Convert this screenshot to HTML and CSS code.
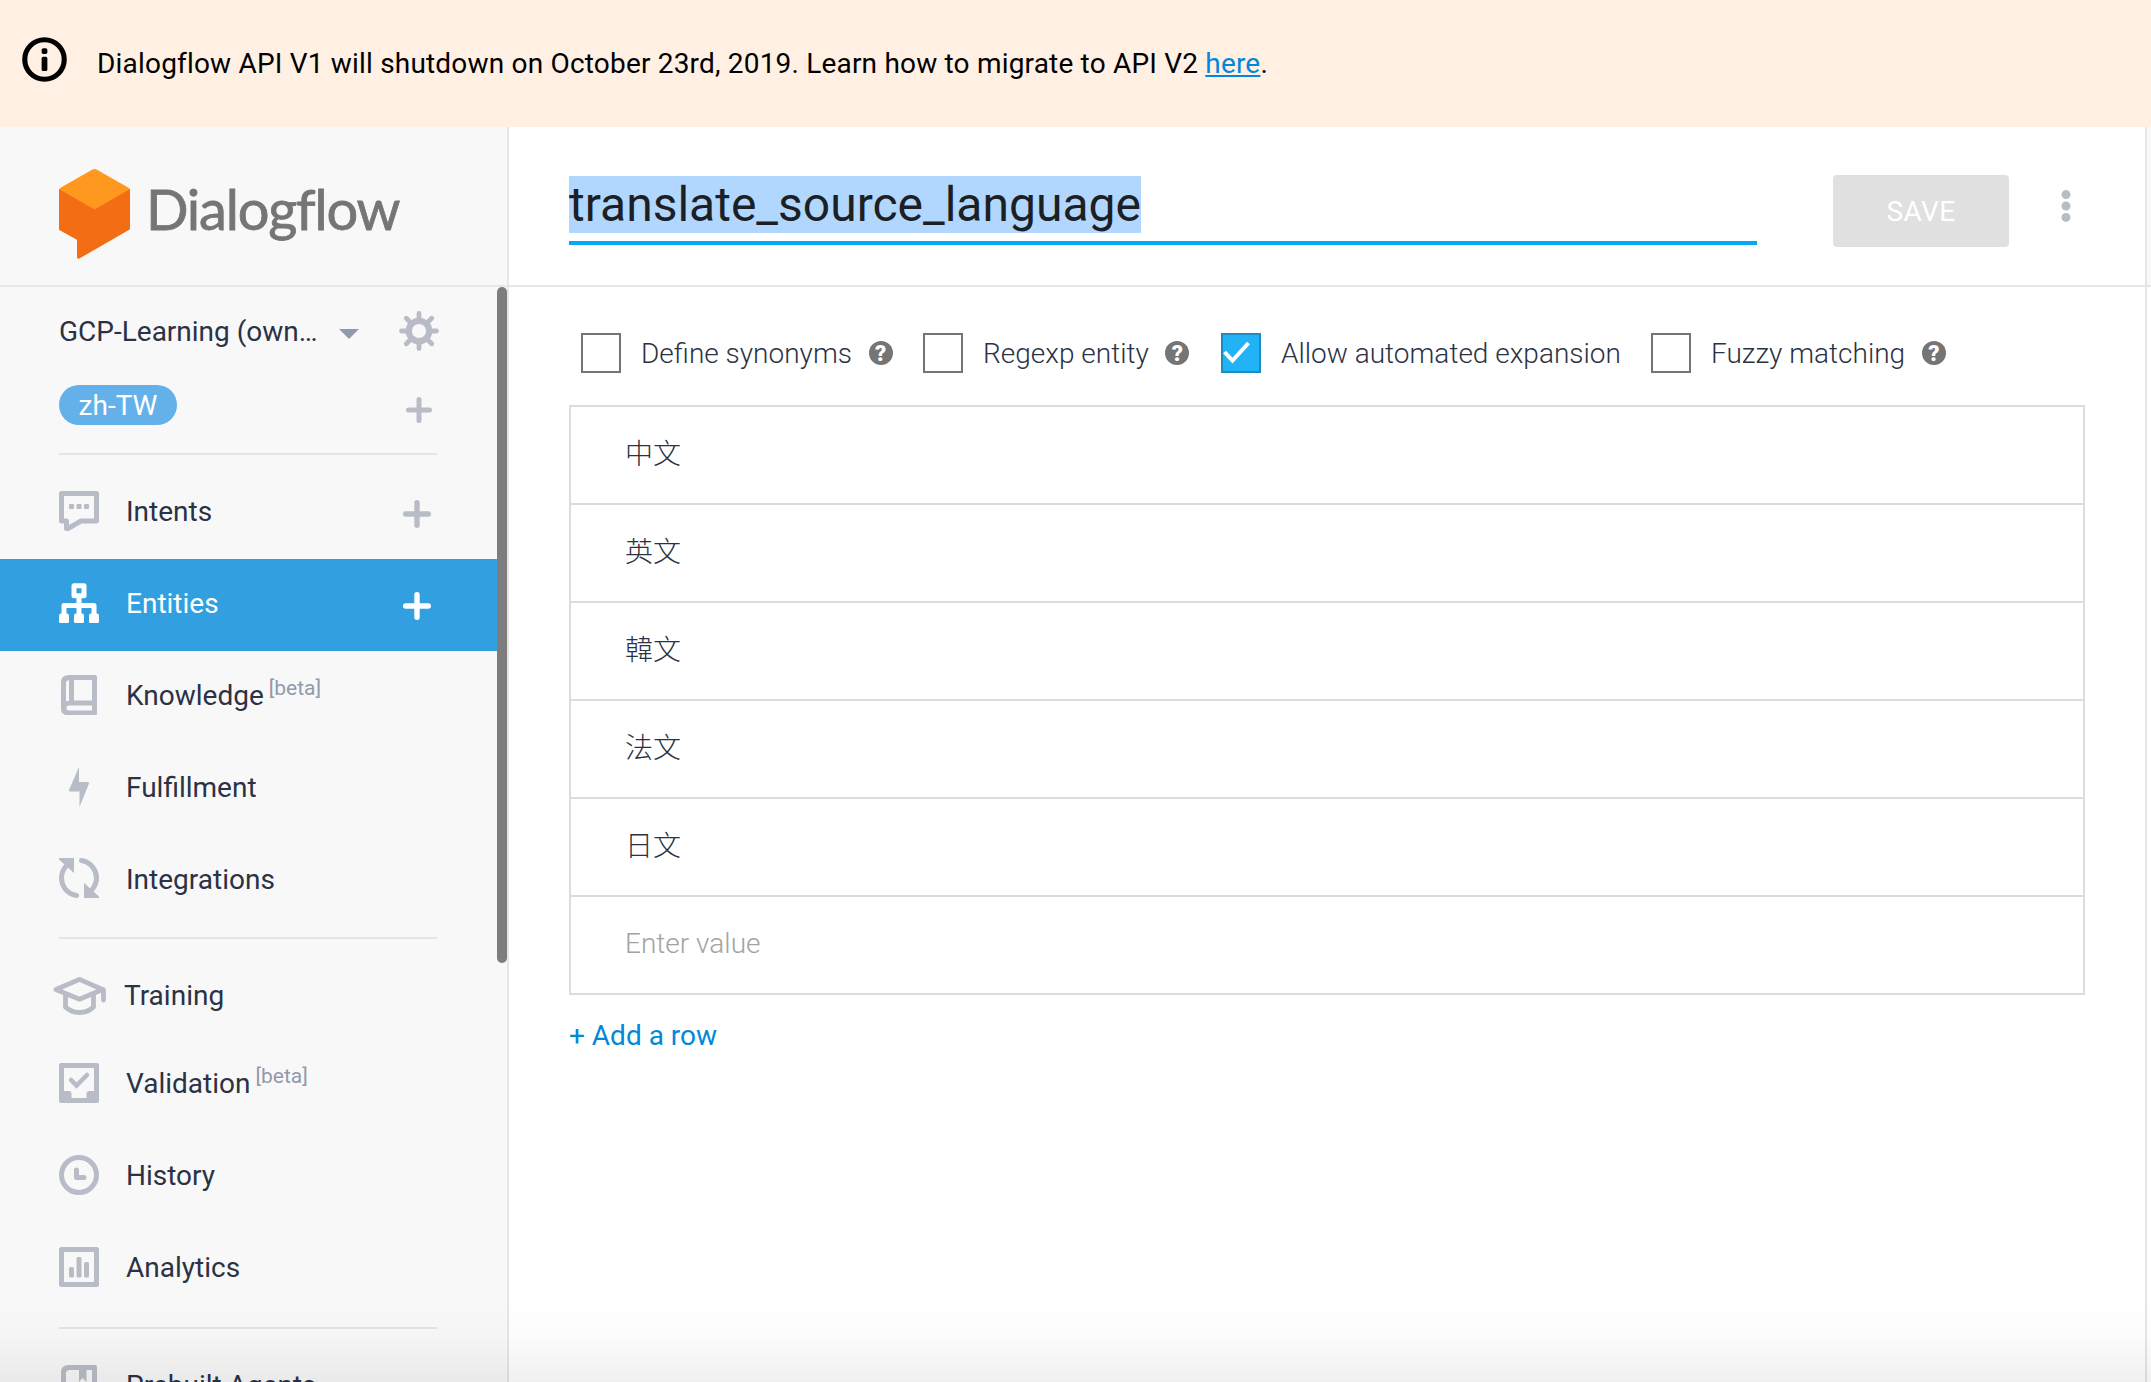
FILE: index.html
```html
<!DOCTYPE html>
<html lang="en">
<head>
<meta charset="utf-8">
<title>Dialogflow</title>
<link rel="stylesheet" href="styles.css">
</head>
<body>
<div class="banner">
  <svg class="banner-icon" viewBox="0 0 44 44"><circle cx="22" cy="22" r="19.3" fill="none" stroke="#000" stroke-width="5"/><rect x="19.2" y="11" width="5.6" height="5.6" rx="1.6"/><rect x="19.2" y="19.3" width="5.6" height="14" rx="1.6"/></svg>
  <p class="banner-text">Dialogflow API V1 will shutdown on October 23rd, 2019. Learn how to migrate to API V2 <a href="#">here</a>.</p>
</div>
<div class="app">
  <aside class="sidebar">
    <div class="brand">
      <svg class="brand-mark" viewBox="0 0 71 91"><path fill="#f26d13" stroke="#f26d13" stroke-width="3" stroke-linejoin="round" d="M1.500 22L35.500 38L69.500 22V60.500L19.500 89.300V71L1.500 61Z"/><path fill="#ff981e" d="M33 1.700Q35.500 .3 38 1.700L69.500 19.800Q71 21 69.500 22L35.500 41.500L1.500 22Q0 21 1.500 19.800Z"/></svg>
      <span class="brand-name">Dialogflow</span>
    </div>
    <div class="side-body">
      <nav class="menu">
        <div class="agent">
          <span class="agent-name">GCP-Learning (own…</span>
          <svg class="caret" viewBox="0 0 20 10"><path fill="#9299ad" d="M0 0H20L10 10Z"/></svg>
          <svg class="gear" viewBox="-20 -20 40 40"><g stroke="#b7bcc7" stroke-width="4.800" stroke-linecap="round"><path d="M0 -17.500V17.500M-17.500 0H17.500M-12.700 -12.700L12.700 12.700M12.700 -12.700L-12.700 12.700"/></g><circle r="10.200" fill="#f8f8f8" stroke="#b7bcc7" stroke-width="6.200"/></svg>
        </div>
        <div class="lang">
          <span class="pill">zh-TW</span>
          <svg class="plus-sm" viewBox="0 0 26 26"><path d="M13 2.500V23.500M2.500 13H23.500" stroke="#b7bcc7" stroke-width="5" stroke-linecap="round"/></svg>
        </div>
        <hr>
        <a class="item"><svg class="ico" viewBox="0 0 40 40"><path fill="none" stroke="#b7bcc7" stroke-width="5" stroke-linejoin="round" d="M2.500 2.500H37.500V30H22L9 37.500H7.500V30H2.500Z"/><path fill="#b7bcc7" d="M11 13h3a1 1 0 0 1 1 1v3a1 1 0 0 1-1 1h-3a1 1 0 0 1-1-1v-3a1 1 0 0 1 1-1zM18.500 13h3a1 1 0 0 1 1 1v3a1 1 0 0 1-1 1h-3a1 1 0 0 1-1-1v-3a1 1 0 0 1 1-1zM26 13h3a1 1 0 0 1 1 1v3a1 1 0 0 1-1 1h-3a1 1 0 0 1-1-1v-3a1 1 0 0 1 1-1z"/></svg><span>Intents</span><svg class="plus" viewBox="0 0 28 28"><path d="M14 2.700V25.300M2.700 14H25.300" stroke="#b7bcc7" stroke-width="5.400" stroke-linecap="round"/></svg></a>
        <a class="item active"><svg class="ico" viewBox="0 0 40 40"><g fill="#fff"><rect y="30.500" width="10" height="9.800" rx="2"/><rect x="15" y="30.500" width="10" height="9.800" rx="2"/><rect x="30" y="30.500" width="10" height="9.800" rx="2"/></g><g fill="none" stroke="#fff" stroke-width="5" stroke-linejoin="round"><rect x="15" y="2.700" width="10" height="10"/><path d="M20 13V32M5 32V22.500H35V32"/></g></svg><span>Entities</span><svg class="plus" viewBox="0 0 28 28"><path d="M14 2.700V25.300M2.700 14H25.300" stroke="#fff" stroke-width="5.400" stroke-linecap="round"/></svg></a>
        <a class="item"><svg class="ico" viewBox="0 0 40 40"><path fill="#b7bcc7" fill-rule="evenodd" d="M9 0H36Q38 0 38 2V38.500Q38 40.500 36 40.500H9Q2 40 2 33.500V7Q2 .5 9 0ZM10 5Q7 5.500 7 8.500V26H10ZM15 5V25.500H33V5ZM10 30.500Q7.500 30.500 7.500 33T10 35.500H33V30.500Z"/></svg><span>Knowledge</span><sup>[beta]</sup></a>
        <a class="item"><svg class="ico" viewBox="0 0 40 40"><path fill="#b7bcc7" d="M20 0V15H29Q30.500 15 30 16.500L20.500 40V24.500H11Q9.500 24.500 10 23Z"/></svg><span>Fulfillment</span></a>
        <a class="item"><svg class="ico sync" viewBox="0 0 40 40"><g fill="none" stroke="#b7bcc7" stroke-width="5" stroke-linecap="round"><path d="M22.500 2.500C33 4.500 37.500 13 37.500 20C37.500 26 35 30 31 34"/><path d="M17.500 37.500C7 35.500 2.500 27 2.500 20C2.500 14 5 10 9 6"/></g><path fill="#b7bcc7" d="M0 0H15V15L0 1.500ZM40 40H25V25L40 38.500Z"/></svg><span>Integrations</span></a>
        <hr class="second">
        <a class="item training"><svg class="cap" viewBox="0 0 53 38"><g fill="none" stroke="#b7bcc7" stroke-width="4.800" stroke-linejoin="round" stroke-linecap="round"><path d="M3 12.500L26.500 2.400L49.500 12.500L26.500 22.300Z"/><path d="M12.500 18V30Q18 35.500 26.500 35.500T40.500 30V18M50.500 13V23"/></g></svg><span>Training</span></a>
        <a class="item"><svg class="ico" viewBox="0 0 40 40"><path fill="#b7bcc7" fill-rule="evenodd" d="M2 0H38Q40 0 40 2V38Q40 40 38 40H2Q0 40 0 38V2Q0 0 2 0ZM5 5V28H10Q12.500 28 12.500 30.500V35H27.500V30.500Q27.500 28 30 28H35V5Z"/><path d="M12 17L17.500 22.500L28 12" fill="none" stroke="#b7bcc7" stroke-width="4.500" stroke-linecap="round"/></svg><span>Validation</span><sup>[beta]</sup></a>
        <a class="item"><svg class="ico" viewBox="0 0 40 40"><circle cx="20" cy="20" r="17.500" fill="none" stroke="#b7bcc7" stroke-width="5"/><path d="M17.500 15V22.500H25" fill="none" stroke="#b7bcc7" stroke-width="5" stroke-linecap="round" stroke-linejoin="round"/></svg><span>History</span></a>
        <a class="item"><svg class="ico" viewBox="0 0 40 40"><rect x="2.500" y="2.500" width="35" height="35" fill="none" stroke="#b7bcc7" stroke-width="5" stroke-linejoin="round"/><g fill="#b7bcc7"><rect x="10" y="20" width="5" height="10.500" rx="1.500"/><rect x="17.500" y="10" width="5" height="20.500" rx="1.500"/><rect x="25" y="15" width="5" height="15.500" rx="1.500"/></g></svg><span>Analytics</span></a>
        <hr class="third">
        <a class="item"><svg class="ico" viewBox="0 0 40 40"><path fill="#b7bcc7" fill-rule="evenodd" d="M9 0H36Q38 0 38 2V40H2V7Q2 .5 9 0ZM10 5Q7 5.500 7 8.500V26H33V5H27.500V17L23.500 13L20 17V5Z"/></svg><span>Prebuilt Agents</span></a>
      </nav>
      <div class="scroll-thumb"></div>
    </div>
  </aside>
  <main class="content">
    <header class="top">
      <div class="title"><span class="selected">translate_source_language</span></div>
      <button class="save">SAVE</button>
      <svg class="dots" viewBox="0 0 10 32"><g fill="#b7bcc7"><circle cx="5" cy="4.600" r="4.500"/><circle cx="5" cy="16" r="4.500"/><circle cx="5" cy="27.400" r="4.500"/></g></svg>
    </header>
    <div class="options">
      <div class="opt o1"><i class="box"></i><span>Define synonyms</span><b class="help">?</b></div>
      <div class="opt o2"><i class="box"></i><span>Regexp entity</span><b class="help">?</b></div>
      <div class="opt o3"><i class="box on"><svg viewBox="0 0 36 36"><path d="M1.500 17L9.500 25.500L25.500 8" fill="none" stroke="#fff" stroke-width="4"/></svg></i><span>Allow automated expansion</span></div>
      <div class="opt o4"><i class="box"></i><span>Fuzzy matching</span><b class="help">?</b></div>
    </div>
    <div class="table">
      <div class="row">中文</div>
      <div class="row">英文</div>
      <div class="row">韓文</div>
      <div class="row">法文</div>
      <div class="row">日文</div>
      <div class="row placeholder">Enter value</div>
    </div>
    <a class="add">+ Add a row</a>
  </main>
  <div class="edge"><div class="edge-top"></div></div>
</div>
<div class="fade"></div>
</body>
</html>
```

FILE: styles.css
```css
* { box-sizing: border-box; }
body { margin: 0; height: 1382px; overflow: hidden; display: flex; flex-direction: column; font-family: Roboto, "Noto Sans CJK TC", sans-serif; font-size: 28px; line-height: 32px; color: #2b3245; background: #fff; }
svg { display: block; flex: none; }
.banner { flex: none; height: 127px; background: #fff0e3; display: flex; align-items: flex-start; padding: 37px 0 0 22px; gap: 30px; color: #000; }
.banner-icon { width: 45px; height: 45px; }
.banner-text { margin: 11px 0 0; white-space: nowrap; letter-spacing: .188px; }
.banner-text a { color: #0288d8; text-decoration: underline; }
.app { flex: 1; min-height: 0; display: flex; }
.sidebar { width: 509px; flex: none; background: #f8f8f8; border-right: 2px solid #e6e6e6; display: flex; flex-direction: column; }
.brand { height: 160px; flex: none; border-bottom: 2px solid #e6e6e6; display: flex; align-items: flex-start; padding: 41px 0 0 59px; gap: 16px; }
.brand-mark { width: 71px; height: 91px; }
.brand-name { font-family: Lato, sans-serif; font-size: 56px; line-height: 68px; margin-top: 7px; letter-spacing: -1.2px; -webkit-text-stroke: .8px #757575; color: #757575; }
.side-body { flex: 1; min-height: 0; display: flex; overflow: hidden; }
.menu { width: 497px; }
.scroll-thumb { width: 10px; height: 676px; border-radius: 5px; background: #7d7d7d; }
.agent { height: 98px; padding: 24px 0 0 59px; display: flex; align-items: flex-start; }
.agent-name { width: 280px; margin-top: 5px; white-space: nowrap; }
.caret { width: 20px; height: 10px; margin-top: 18px; }
.gear { width: 40px; height: 40px; margin-left: 40px; }
.lang { height: 68px; padding-left: 59px; display: flex; align-items: flex-start; }
.pill { width: 118px; height: 40px; border-radius: 20px; background: #64b0e8; color: #fff; text-align: center; line-height: 42px; }
.plus-sm { width: 26px; height: 26px; margin: 11.500px 0 0 229px; }
hr { margin: 0 0 12px 59px; width: 378px; height: 2px; border: 0; background: #e4e4e4; }
.second { margin-top: 10px; }
.third { margin-top: 12px; }
.item { height: 92px; padding: 24px 66px 0 59px; display: flex; align-items: flex-start; }
.item span { margin: 5px 0 0 27px; }
.item sup { font-size: 21px; line-height: 24px; margin: 1px 0 0 5px; color: #9299ad; }
.item.active { background: #32a0e0; color: #fff; }
.ico { width: 40px; height: 40px; }
.sync { margin-top: -1px; }
.plus { width: 28px; height: 28px; margin: 9px 0 0 auto; }
.training { height: 88px; padding-left: 52.500px; }
.item.training span { margin-left: 18.500px; }
.cap { width: 53px; height: 38px; margin-top: 2px; }
.content { width: 1636px; flex: none; display: flex; flex-direction: column; }
.top { height: 160px; flex: none; border-bottom: 2px solid #e6e6e6; padding: 48px 0 0 60px; display: flex; align-items: flex-start; }
.title { width: 1188px; height: 70px; border-bottom: 4px solid #03a9f4; font-size: 48px; line-height: 60px; color: #1c1f24; }
.selected { background: #b1d7fe; }
.save { width: 176px; height: 72px; margin-left: 76px; border: 0; border-radius: 4px; background: #e0e0e0; color: #fff; font: 28px/72px Roboto, sans-serif; letter-spacing: .4px; padding: 1px 0 0; }
.dots { width: 10px; height: 32px; margin: 14.500px 0 0 52.300px; }
.options { height: 118px; flex: none; padding: 46px 0 0 72px; display: flex; align-items: flex-start; font-weight: 300; }
.opt { display: flex; align-items: center; height: 40px; white-space: nowrap; }
.opt span { padding-top: 2px; }
.o1 { width: 342px; }
.o2 { width: 298px; }
.o3 { width: 430px; }
.box { width: 40px; height: 40px; flex: none; border: 2px solid #757575; margin-right: 20px; }
.box.on { background: #22b2f6; border-color: #1b8bc0; }
.help { width: 24px; height: 24px; margin-left: 16.700px; border-radius: 50%; background: #757575; color: #fff; font: 900 22px/25px Roboto, sans-serif; text-align: center; }
.table { width: 1516px; margin-left: 60px; flex: none; border: 2px solid #dcdcdc; font-weight: 300; }
.row { height: 98px; border-bottom: 2px solid #dcdcdc; padding-left: 54px; line-height: 96px; }
.row:last-child { border-bottom: 0; height: 96px; }
.placeholder { color: #a3a3a3; line-height: 94px; }
.add { margin: 25px 0 0 60px; color: #0288d8; }
.edge { flex: 1; border-left: 2px solid #e6e6e6; }
.edge-top { height: 160px; background: #f8f8f8; border-bottom: 2px solid #e6e6e6; }
.fade { position: absolute; left: 0; top: 1298px; width: 2151px; height: 84px; background: linear-gradient(rgba(0,0,0,0), rgba(0,0,0,.012) 45%, rgba(0,0,0,.06)); }
```
